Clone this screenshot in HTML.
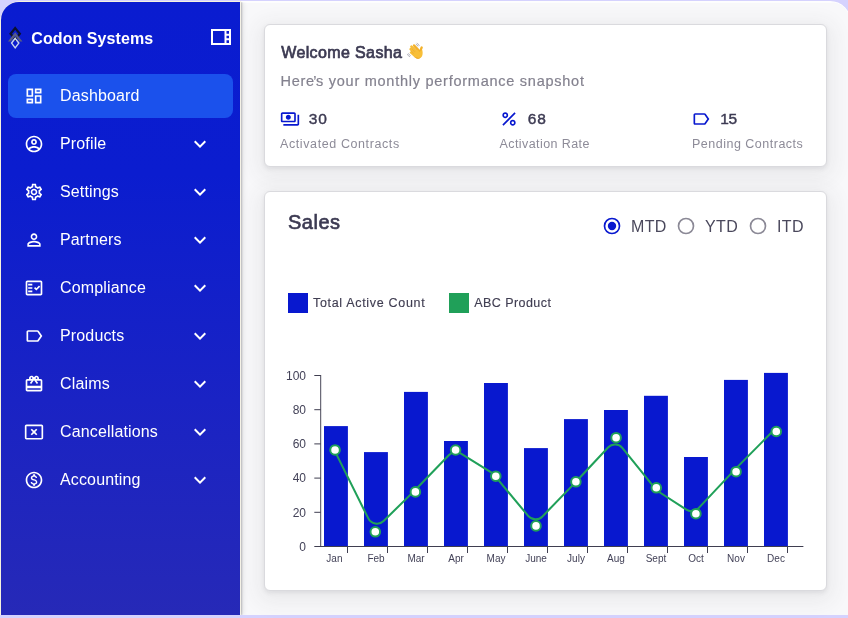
<!DOCTYPE html>
<html lang="en">
<head>
<meta charset="utf-8">
<title>Codon Systems – Dashboard</title>
<style>
*{box-sizing:border-box;margin:0;padding:0}
html,body{width:848px;height:618px;overflow:hidden}
body{background:#d5d2fe;font-family:"Liberation Sans",sans-serif;position:relative}
.page{position:absolute;left:0;top:0;width:848px;height:618px;overflow:hidden;will-change:transform}
.ring{position:absolute;left:0;top:1px;width:851px;height:614px;background:linear-gradient(90deg,#f6f2de 0,#f6f2de 240px,#fefefe 242px);border-radius:20.5px 21px 0 0}
.app{position:absolute;left:1px;top:2px;width:849px;height:613px;border-radius:18px 20px 0 0;overflow:hidden;background:#f8f8fa}
.main{position:absolute;left:239px;top:0;right:0;bottom:0;background:#f8f8fa;border-top:1px solid #fdfdfe}
.sidebar{position:absolute;left:0;top:0;width:239px;height:613px;background:linear-gradient(180deg,#0a1cd0 0%,#0b1dcf 28%,#1a23c4 65%,#2629b7 100%);box-shadow:1px 0 0 #f4f1e6,2px 0 1.5px rgba(0,0,0,.20),3px 0 5px rgba(0,0,0,.10)}
.brand{position:absolute;left:30.3px;top:27.8px;font-size:16px;font-weight:700;color:#fff;line-height:18px;white-space:nowrap;letter-spacing:.08px}
.nav{position:absolute;left:7px;width:225px;height:44px;border-radius:8px;color:#fff}
.nav.active{background:#1b51ec}
.nav .ic{position:absolute;left:16px;top:12px;width:20px;height:20px;fill:#fff}
.nav .tx{position:absolute;left:52px;top:12px;font-size:16px;line-height:20px;letter-spacing:.15px;white-space:nowrap}
.nav .ch{position:absolute;left:180px;top:10px;width:24px;height:24px;fill:#fff}
.card{position:absolute;background:#fff;border:1px solid #dadade;border-radius:6px;box-shadow:0 2px 4px rgba(58,53,65,.09),0 5px 20px 7px rgba(58,53,65,.065)}
.abs{position:absolute;white-space:nowrap}
.h1{font-size:16px;font-weight:400;color:#3c3a52;-webkit-text-stroke:.7px #3c3a52;letter-spacing:.38px;line-height:18px}
.sub{font-size:14.5px;color:#84828f;letter-spacing:.745px;line-height:18px;-webkit-text-stroke:.2px #84828f}
.num{font-size:15.5px;font-weight:400;color:#3c3a52;-webkit-text-stroke:.42px #3c3a52;letter-spacing:.95px;line-height:18px}
.lbl{font-size:12.5px;color:#8d8b98;letter-spacing:.5px;line-height:14px}
.leg{font-size:12.5px;color:#403e52;letter-spacing:.68px;line-height:14px;-webkit-text-stroke:.15px #403e52}
.rad{font-size:16px;color:#4a485c;line-height:18px;letter-spacing:.35px}
.chart{position:absolute;left:0;top:0}
</style>
</head>
<body>
<div class="page">
<div class="ring"></div>
<div class="app">
  <div class="main"></div>
  <div class="sidebar">
    <svg class="abs" style="left:-1px;top:-2px" width="40" height="60" viewBox="0 0 40 60">
<path d="M15.2 28.1 L19.85 33.8 L15.2 39.5 L10.55 33.8 Z" fill="none" stroke="#0b1030" stroke-width="2.2" stroke-linejoin="miter"/>
<path d="M15.2 32.3 L22.5 41.4 L19.6 41.4 L15.2 35.9 L10.8 41.4 L7.9 41.4 Z" fill="#575c86"/>
<path d="M15.2 38.35 L18.8 43.1 L15.2 47.85 L11.6 43.1 Z" fill="none" stroke="#c6d2ea" stroke-width="1.5" stroke-linejoin="miter"/>
</svg>
    <div class="brand">Codon Systems</div>
    <svg class="abs" style="left:208px;top:23.4px;width:24px;height:24px;fill:#fff" viewBox="0 0 24 24"><path d="M2 4v16h20V4H2zm18 4.670h-2.500V6H20v2.670zm-2.500 2H20v2.670h-2.500v-2.670zM4 6h11.500v12H4V6zm13.500 12v-2.670H20V18h-2.500z"/></svg>
    <div class="nav active" style="top:72px"><svg class="ic" style="" viewBox="0 0 24 24"><path d="M19 5v2h-4V5h4M9 5v6H5V5h4m10 8v6h-4v-6h4M9 17v2H5v-2h4M21 3h-8v6h8V3zM11 3H3v10h8V3zm10 8h-8v10h8V11zm-10 4H3v6h8v-6z"/></svg><span class="tx">Dashboard</span></div>
    <div class="nav" style="top:120px"><svg class="ic" style="" viewBox="0 0 24 24"><path d="M12 2C6.48 2 2 6.48 2 12s4.48 10 10 10 10-4.48 10-10S17.52 2 12 2zM7.07 18.28c.43-.9 3.05-1.78 4.93-1.78s4.51.88 4.93 1.78C15.57 19.36 13.86 20 12 20s-3.57-.64-4.93-1.72zm11.29-1.45c-1.43-1.74-4.9-2.33-6.36-2.33s-4.93.59-6.36 2.33C4.62 15.49 4 13.82 4 12c0-4.41 3.59-8 8-8s8 3.59 8 8c0 1.82-.62 3.49-1.64 4.83zM12 6c-1.94 0-3.5 1.56-3.5 3.5S10.06 13 12 13s3.5-1.56 3.5-3.5S13.94 6 12 6zm0 5c-.83 0-1.5-.67-1.5-1.5S11.17 8 12 8s1.5.67 1.5 1.500S12.830 11 12 11z"/></svg><span class="tx">Profile</span><svg class="ch" style="" viewBox="0 0 24 24"><path d="M16.590 8.590 12 13.170 7.410 8.590 6 10l6 6 6-6z"/></svg></div>
    <div class="nav" style="top:168px"><svg class="ic" style="" viewBox="0 0 24 24"><path d="M19.43 12.98c.04-.32.07-.64.07-.98 0-.34-.03-.66-.07-.98l2.11-1.65c.19-.15.24-.42.12-.64l-2-3.46c-.09-.16-.26-.25-.44-.25-.06 0-.12.01-.17.03l-2.49 1c-.52-.4-1.08-.73-1.69-.98l-.38-2.650C14.460 2.180 14.250 2 14 2h-4c-.25 0-.46.18-.49.42l-.38 2.650c-.61.25-1.170.59-1.690.98l-2.490-1c-.06-.02-.12-.03-.18-.03-.17 0-.34.09-.43.25l-2 3.460c-.13.22-.07.49.12.64l2.110 1.650c-.04.32-.07.65-.07.98 0 .33.03.66.07.98l-2.110 1.650c-.19.15-.24.42-.12.64l2 3.460c.09.16.26.25.44.25.06 0 .12-.01.17-.03l2.490-1c.52.4 1.080.73 1.690.98l.38 2.650c.03.24.24.42.49.42h4c.25 0 .46-.18.49-.42l.38-2.650c.61-.25 1.170-.59 1.690-.98l2.490 1c.06.02.12.03.18.03.17 0 .34-.09.43-.25l2-3.460c.12-.22.07-.49-.12-.64l-2.110-1.650zm-1.980-1.710c.04.31.05.52.05.73 0 .21-.02.43-.05.73l-.14 1.130.89.7 1.080.84-.7 1.210-1.270-.51-1.040-.42-.9.68c-.43.32-.84.56-1.250.73l-1.060.43-.16 1.130-.2 1.350h-1.400l-.19-1.350-.16-1.130-1.060-.43c-.43-.18-.83-.41-1.230-.71l-.91-.7-1.060.43-1.270.51-.7-1.210 1.080-.84.89-.7-.14-1.130c-.03-.31-.05-.54-.05-.74s.02-.43.05-.73l.14-1.130-.89-.7-1.080-.84.7-1.210 1.270.51 1.040.42.9-.68c.43-.32.84-.56 1.250-.73l1.060-.43.16-1.130.2-1.350h1.390l.19 1.350.16 1.130 1.060.43c.43.18.83.41 1.230.71l.91.7 1.060-.43 1.270-.51.7 1.210-1.070.85-.89.7.14 1.130zM12 8c-2.210 0-4 1.790-4 4s1.790 4 4 4 4-1.790 4-4-1.790-4-4-4zm0 6c-1.100 0-2-.9-2-2s.9-2 2-2 2 .9 2 2-.9 2-2 2z"/></svg><span class="tx">Settings</span><svg class="ch" style="" viewBox="0 0 24 24"><path d="M16.590 8.590 12 13.170 7.410 8.590 6 10l6 6 6-6z"/></svg></div>
    <div class="nav" style="top:216px"><svg class="ic" style="" viewBox="0 0 24 24"><path d="M12 5.9c1.16 0 2.1.94 2.1 2.1s-.94 2.1-2.1 2.1S9.9 9.16 9.9 8s.94-2.1 2.1-2.1m0 9c2.97 0 6.1 1.46 6.1 2.1v1.1H5.9V17c0-.64 3.13-2.1 6.1-2.1M12 4C9.79 4 8 5.79 8 8s1.79 4 4 4 4-1.79 4-4-1.79-4-4-4zm0 9c-2.67 0-8 1.34-8 4v3h16v-3c0-2.66-5.33-4-8-4z"/></svg><span class="tx">Partners</span><svg class="ch" style="" viewBox="0 0 24 24"><path d="M16.590 8.590 12 13.170 7.410 8.590 6 10l6 6 6-6z"/></svg></div>
    <div class="nav" style="top:264px"><svg class="ic" style="" viewBox="0 0 24 24"><path d="M20 3H4c-1.1 0-2 .9-2 2v14c0 1.100.9 2 2 2h16c1.100 0 2-.9 2-2V5c0-1.100-.9-2-2-2zm0 16H4V5h16v14zM19.410 10.420 17.990 9l-3.170 3.170-1.410-1.420L12 12.160 14.820 15zM5 7h5v2H5zM5 11h5v2H5zM5 15h5v2H5z"/></svg><span class="tx">Compliance</span><svg class="ch" style="" viewBox="0 0 24 24"><path d="M16.590 8.590 12 13.170 7.410 8.590 6 10l6 6 6-6z"/></svg></div>
    <div class="nav" style="top:312px"><svg class="ic" style="" viewBox="0 0 24 24"><path d="M17.63 5.84C17.27 5.33 16.67 5 16 5L5 5.010C3.900 5.010 3 5.900 3 7v10c0 1.100.9 1.990 2 1.990L16 19c.67 0 1.270-.33 1.630-.84L22 12l-4.370-6.160zM16 17H5V7h11l3.550 5L16 17z"/></svg><span class="tx">Products</span><svg class="ch" style="" viewBox="0 0 24 24"><path d="M16.590 8.590 12 13.170 7.410 8.590 6 10l6 6 6-6z"/></svg></div>
    <div class="nav" style="top:360px"><svg class="ic" style="" viewBox="0 0 24 24"><path d="M20 6h-2.180c.11-.31.18-.65.18-1 0-1.660-1.340-3-3-3-1.050 0-1.960.54-2.500 1.350l-.5.67-.5-.68C10.960 2.540 10.050 2 9 2 7.340 2 6 3.340 6 5c0 .35.07.69.18 1H4c-1.110 0-1.990.89-1.990 2L2 19c0 1.110.89 2 2 2h16c1.110 0 2-.89 2-2V8c0-1.110-.89-2-2-2zm-5-2c.55 0 1 .45 1 1s-.45 1-1 1-1-.45-1-1 .45-1 1-1zM9 4c.55 0 1 .45 1 1s-.45 1-1 1-1-.45-1-1 .45-1 1-1zm11 15H4v-2h16v2zm0-5H4V8h5.080L7 10.830 8.620 12 11 8.760l1-1.360 1 1.360L15.380 12 17 10.830 14.920 8H20v6z"/></svg><span class="tx">Claims</span><svg class="ch" style="" viewBox="0 0 24 24"><path d="M16.590 8.590 12 13.170 7.410 8.590 6 10l6 6 6-6z"/></svg></div>
    <div class="nav" style="top:408px"><svg class="ic" style="" viewBox="0 0 24 24"><path d="M21 19.100H3V5h18v14.100zM21 3H3c-1.100 0-2 .9-2 2v14c0 1.100.9 2 2 2h18c1.100 0 2-.9 2-2V5c0-1.100-.9-2-2-2zM14.590 8 12 10.590 9.410 8 8 9.410 10.590 12 8 14.590 9.410 16 12 13.410 14.590 16 16 14.590 13.410 12 16 9.410z"/></svg><span class="tx">Cancellations</span><svg class="ch" style="" viewBox="0 0 24 24"><path d="M16.590 8.590 12 13.170 7.410 8.590 6 10l6 6 6-6z"/></svg></div>
    <div class="nav" style="top:456px"><svg class="ic" style="" viewBox="0 0 24 24"><path d="M12 2C6.480 2 2 6.480 2 12s4.480 10 10 10 10-4.480 10-10S17.520 2 12 2zm0 18c-4.410 0-8-3.590-8-8s3.590-8 8-8 8 3.590 8 8-3.590 8-8 8zm.31-8.860c-1.770-.45-2.340-.94-2.340-1.670 0-.84.79-1.430 2.100-1.430 1.380 0 1.900.66 1.940 1.640h1.710c-.05-1.340-.87-2.570-2.490-2.970V5H10.900v1.690c-1.510.32-2.720 1.300-2.720 2.810 0 1.790 1.490 2.690 3.660 3.210 1.950.46 2.340 1.150 2.340 1.870 0 .53-.39 1.390-2.100 1.390-1.600 0-2.230-.72-2.320-1.640H8.040c.1 1.700 1.360 2.660 2.860 2.970V19h2.340v-1.670c1.520-.29 2.720-1.160 2.730-2.770-.01-2.200-1.900-2.960-3.660-3.420z"/></svg><span class="tx">Accounting</span><svg class="ch" style="" viewBox="0 0 24 24"><path d="M16.590 8.590 12 13.170 7.410 8.590 6 10l6 6 6-6z"/></svg></div>
  </div>
</div>

<!-- cards are positioned in page coordinates -->
<div class="card" style="left:264px;top:24px;width:563px;height:143px"></div>
<div class="card" style="left:264px;top:191px;width:563px;height:400px"></div>

<div class="abs h1" style="left:281.2px;top:44px">Welcome Sasha</div>
<svg class="abs" style="left:404px;top:40px" width="22" height="22" viewBox="404 40 22 22">
<g fill="none" stroke-linecap="round">
<path d="M416.2 44.3 q1.1.4 1.600 1.700 M417.100 43.300 q1.500.6 2.100 2.200" stroke="#9c9ca8" stroke-width=".75"/>
<path d="M408.600 53.700 q.4 1.200 1.700 1.800 M407.400 54.300 q.6 1.700 2.300 2.400" stroke="#9c9ca8" stroke-width=".75"/>
<path d="M419.300 51.200 L414.100 45.500" stroke="#f3b12a" stroke-width="2.500"/>
<path d="M417 52.500 L411.400 46.700" stroke="#f7bd36" stroke-width="2.500"/>
<path d="M415.500 54.200 L410.600 49.200" stroke="#f7bd36" stroke-width="2.500"/>
<path d="M414.800 56 L410.900 52.500" stroke="#f7bd36" stroke-width="2.300"/>
<path d="M420.700 52.500 Q420.500 49.500 421.700 47.400" stroke="#f3b12a" stroke-width="2.300"/>
<path d="M418.200 51.900 L413.600 47 M416.300 53.400 L411.700 48.700 M415.200 55.100 L411.300 51.300" stroke="#e3a022" stroke-width=".55"/>
</g>
<path d="M412.600 54.500 L417.500 49.800 L419.500 52 L422.300 50 C423 53 422.800 56 421 57.600 C419 59.300 416.800 59 415 57.500 Z" fill="#f8bf38"/>
<path d="M413.800 56.600 C415.500 58.600 418.500 59.600 421 57.600 C419.500 58.300 416.500 58.300 413.800 56.600 Z" fill="#e9a21f"/>
</svg>
<div class="abs sub" style="left:280.5px;top:72px">Here<span style="margin:0 -1.3px 0 -1.6px">’</span>s your monthly performance snapshot</div>

<svg class="abs" style="left:280px;top:109px;width:20px;height:20px" viewBox="0 0 24 24" fill="#0818cf"><path d="M19 14V6c0-1.100-.9-2-2-2H3c-1.100 0-2 .9-2 2v8c0 1.100.9 2 2 2h14c1.100 0 2-.9 2-2zm-2 0H3V6h14v8zm-7-7c-1.660 0-3 1.340-3 3s1.340 3 3 3 3-1.340 3-3-1.340-3-3-3zm13 0v11c0 1.100-.9 2-2 2H4v-2h17V7h2z"/></svg>
<div class="abs num" style="left:308.8px;top:109.8px">30</div>
<div class="abs lbl" style="left:280px;top:137px;letter-spacing:.6px">Activated Contracts</div>
<svg class="abs" style="left:498.5px;top:109px;width:20px;height:20px" viewBox="0 0 24 24" fill="#0818cf"><path d="M7.500 11C9.430 11 11 9.430 11 7.500S9.430 4 7.500 4 4 5.570 4 7.500 5.570 11 7.500 11zm0-5C8.330 6 9 6.670 9 7.500S8.330 9 7.500 9 6 8.330 6 7.500 6.670 6 7.500 6zM4.002 18.583 18.590 3.996l1.410 1.410L5.410 19.997zM16.500 13c-1.930 0-3.500 1.570-3.500 3.500s1.570 3.500 3.500 3.500 3.500-1.570 3.500-3.500-1.570-3.500-3.500-3.500zm0 5c-.83 0-1.500-.67-1.500-1.500s.67-1.500 1.500-1.500 1.500.67 1.500 1.500-.67 1.500-1.500 1.500z"/></svg>
<div class="abs num" style="left:527.8px;top:109.8px">68</div>
<div class="abs lbl" style="left:499.5px;top:137px;letter-spacing:.42px">Activation Rate</div>
<svg class="abs" style="left:691.1px;top:109px;width:20px;height:20px" viewBox="0 0 24 24" fill="#0818cf"><path d="M17.63 5.84C17.27 5.33 16.67 5 16 5L5 5.010C3.900 5.010 3 5.900 3 7v10c0 1.100.9 1.990 2 1.990L16 19c.67 0 1.270-.33 1.630-.84L22 12l-4.370-6.160zM16 17H5V7h11l3.550 5L16 17z"/></svg>
<div class="abs num" style="left:720.2px;top:109.8px;letter-spacing:-.3px">15</div>
<div class="abs lbl" style="left:692px;top:137px;letter-spacing:.5px">Pending Contracts</div>

<div class="abs" style="left:288px;top:210px;font-size:20px;font-weight:400;color:#3c3a52;-webkit-text-stroke:.65px #3c3a52;letter-spacing:.5px;line-height:24px">Sales</div>
<svg class="abs" style="left:602.1px;top:215.5px" width="20" height="20" viewBox="0 0 20 20"><circle cx="10" cy="10" r="7.5" fill="none" stroke="#0818cf" stroke-width="1.67"/><circle cx="10" cy="10" r="4.17" fill="#0818cf"/></svg>
<div class="abs rad" style="left:631px;top:218px">MTD</div>
<svg class="abs" style="left:676.0px;top:215.5px" width="20" height="20" viewBox="0 0 20 20"><circle cx="10" cy="10" r="7.5" fill="none" stroke="#8b8996" stroke-width="1.67"/></svg>
<div class="abs rad" style="left:705px;top:218px">YTD</div>
<svg class="abs" style="left:748.2px;top:215.5px" width="20" height="20" viewBox="0 0 20 20"><circle cx="10" cy="10" r="7.5" fill="none" stroke="#8b8996" stroke-width="1.67"/></svg>
<div class="abs rad" style="left:777px;top:218px">ITD</div>

<div class="abs" style="left:288px;top:293px;width:20px;height:20px;background:#0818cf"></div>
<div class="abs leg" style="left:313px;top:296px">Total Active Count</div>
<div class="abs" style="left:449px;top:293px;width:20px;height:20px;background:#20a059"></div>
<div class="abs leg" style="left:474.2px;top:296px;letter-spacing:.45px">ABC Product</div>

<svg class="chart" width="848" height="618" viewBox="0 0 848 618">
<rect x="324.0" y="426.1" width="23.9" height="120.2" fill="#0818cf"/>
<rect x="364.0" y="452.1" width="23.9" height="94.2" fill="#0818cf"/>
<rect x="404.0" y="391.9" width="23.9" height="154.4" fill="#0818cf"/>
<rect x="444.0" y="441.0" width="23.9" height="105.3" fill="#0818cf"/>
<rect x="484.0" y="383.0" width="23.9" height="163.3" fill="#0818cf"/>
<rect x="524.0" y="448.1" width="23.9" height="98.2" fill="#0818cf"/>
<rect x="564.0" y="419.1" width="23.9" height="127.2" fill="#0818cf"/>
<rect x="604.0" y="410.0" width="23.9" height="136.3" fill="#0818cf"/>
<rect x="644.0" y="395.8" width="23.9" height="150.5" fill="#0818cf"/>
<rect x="684.0" y="457.0" width="23.9" height="89.3" fill="#0818cf"/>
<rect x="724.0" y="379.9" width="23.9" height="166.4" fill="#0818cf"/>
<rect x="764.0" y="372.9" width="23.9" height="173.4" fill="#0818cf"/>
<g stroke="#3f3e50" stroke-width="1" fill="none">
<line x1="320.7" y1="375" x2="320.7" y2="547" stroke-width=".95"/>
<line x1="314.3" y1="546.5" x2="803.4" y2="546.5"/>
<line x1="314.3" y1="512.3" x2="320.8" y2="512.3"/>
<line x1="314.3" y1="478.1" x2="320.8" y2="478.1"/>
<line x1="314.3" y1="443.9" x2="320.8" y2="443.9"/>
<line x1="314.3" y1="409.7" x2="320.8" y2="409.7"/>
<line x1="314.3" y1="375.5" x2="320.8" y2="375.5"/>
<line x1="347.5" y1="546.5" x2="347.5" y2="553"/>
<line x1="387.5" y1="546.5" x2="387.5" y2="553"/>
<line x1="427.5" y1="546.5" x2="427.5" y2="553"/>
<line x1="467.5" y1="546.5" x2="467.5" y2="553"/>
<line x1="507.5" y1="546.5" x2="507.5" y2="553"/>
<line x1="547.5" y1="546.5" x2="547.5" y2="553"/>
<line x1="587.5" y1="546.5" x2="587.5" y2="553"/>
<line x1="627.5" y1="546.5" x2="627.5" y2="553"/>
<line x1="667.5" y1="546.5" x2="667.5" y2="553"/>
<line x1="707.5" y1="546.5" x2="707.5" y2="553"/>
<line x1="747.5" y1="546.5" x2="747.5" y2="553"/>
<line x1="787.5" y1="546.5" x2="787.5" y2="553"/>
</g>
<g font-family="Liberation Sans, sans-serif" font-size="12" fill="#434258" text-anchor="end">
<text x="306" y="550.8">0</text>
<text x="306" y="516.6">20</text>
<text x="306" y="482.4">40</text>
<text x="306" y="448.2">60</text>
<text x="306" y="414.0">80</text>
<text x="306" y="379.8">100</text>
</g>
<g font-family="Liberation Sans, sans-serif" font-size="10" fill="#434258" text-anchor="middle">
<text x="334.4" y="562">Jan</text>
<text x="376.0" y="562">Feb</text>
<text x="416.0" y="562">Mar</text>
<text x="456.0" y="562">Apr</text>
<text x="496.0" y="562">May</text>
<text x="536.0" y="562">June</text>
<text x="576.0" y="562">July</text>
<text x="616.0" y="562">Aug</text>
<text x="656.0" y="562">Sept</text>
<text x="696.0" y="562">Oct</text>
<text x="736.0" y="562">Nov</text>
<text x="776.0" y="562">Dec</text>
</g>
<path d="M334.00 449.40 L368.31 518.41 A9.60 9.60 0 0 0 383.63 520.99 L414.31 490.89 A9.60 9.60 0 0 0 414.48 490.71 L449.01 455.07 A9.60 9.60 0 0 1 460.98 453.60 L491.59 472.68 A9.60 9.60 0 0 1 493.89 474.69 L528.16 515.88 A9.60 9.60 0 0 0 542.44 516.42 L574.94 482.86 A9.60 9.60 0 0 0 575.06 482.74 L608.04 447.48 A9.60 9.60 0 0 1 622.53 448.02 L655.63 489.19 A9.60 9.60 0 0 0 657.90 491.24 L686.37 509.65 A9.60 9.60 0 0 0 698.58 508.16 L732.92 471.59 A9.60 9.60 0 0 1 733.09 471.41 L774.50 429.50" fill="none" stroke="#20a059" stroke-width="2.05" stroke-linejoin="round"/>
<circle cx="335.05" cy="449.95" r="4.8" fill="#fff" stroke="#20a059" stroke-width="2"/>
<circle cx="375.30" cy="531.80" r="4.8" fill="#fff" stroke="#20a059" stroke-width="2"/>
<circle cx="415.40" cy="491.90" r="4.8" fill="#fff" stroke="#20a059" stroke-width="2"/>
<circle cx="455.60" cy="450.00" r="4.8" fill="#fff" stroke="#20a059" stroke-width="2"/>
<circle cx="495.80" cy="476.20" r="4.8" fill="#fff" stroke="#20a059" stroke-width="2"/>
<circle cx="536.00" cy="525.90" r="4.8" fill="#fff" stroke="#20a059" stroke-width="2"/>
<circle cx="575.90" cy="481.80" r="4.8" fill="#fff" stroke="#20a059" stroke-width="2"/>
<circle cx="616.10" cy="437.70" r="4.8" fill="#fff" stroke="#20a059" stroke-width="2"/>
<circle cx="656.30" cy="487.80" r="4.8" fill="#fff" stroke="#20a059" stroke-width="2"/>
<circle cx="695.90" cy="513.70" r="4.8" fill="#fff" stroke="#20a059" stroke-width="2"/>
<circle cx="736.10" cy="471.70" r="4.8" fill="#fff" stroke="#20a059" stroke-width="2"/>
<circle cx="776.30" cy="431.50" r="4.8" fill="#fff" stroke="#20a059" stroke-width="2"/>
</svg>
</div>
</body>
</html>
